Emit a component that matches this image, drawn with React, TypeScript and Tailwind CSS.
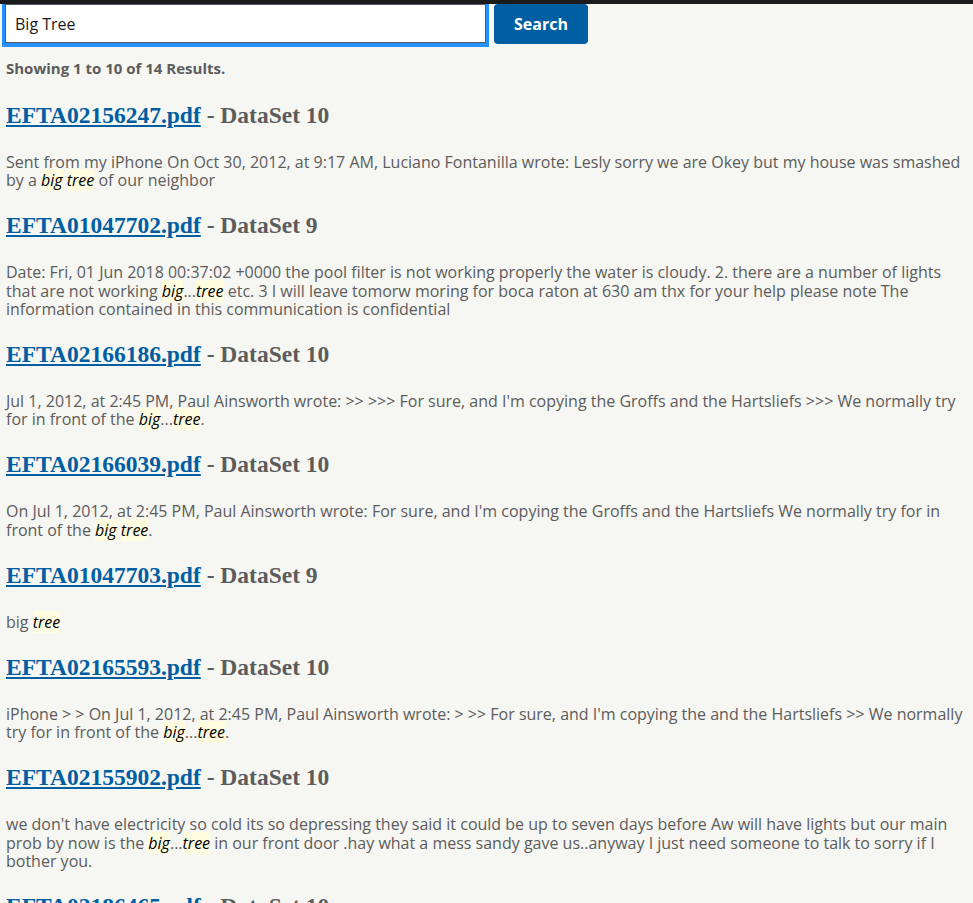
import { useState } from 'react';

type Parte = { t: string; hl?: boolean };

const resultados: { arquivo: string; dataset: number; trecho: Parte[] }[] = [
    {
        arquivo: 'EFTA02156247.pdf',
        dataset: 10,
        trecho: [
            { t: 'Sent from my iPhone On Oct 30, 2012, at 9:17 AM, Luciano Fontanilla wrote: Lesly sorry we are Okey but my house was smashed by a ' },
            { t: 'big', hl: true },
            { t: ' ' },
            { t: 'tree', hl: true },
            { t: ' of our neighbor' },
        ],
    },
    {
        arquivo: 'EFTA01047702.pdf',
        dataset: 9,
        trecho: [
            { t: 'Date: Fri, 01 Jun 2018 00:37:02 +0000 the pool filter is not working properly the water is cloudy. 2. there are a number of lights that are not working ' },
            { t: 'big', hl: true },
            { t: '...' },
            { t: 'tree', hl: true },
            { t: ' etc. 3 I will leave tomorw moring for boca raton at 630 am thx for your help please note The information contained in this communication is confidential' },
        ],
    },
    {
        arquivo: 'EFTA02166186.pdf',
        dataset: 10,
        trecho: [
            { t: "Jul 1, 2012, at 2:45 PM, Paul Ainsworth wrote: >> >>> For sure, and I'm copying the Groffs and the Hartsliefs >>> We normally try for in front of the " },
            { t: 'big', hl: true },
            { t: '...' },
            { t: 'tree', hl: true },
            { t: '.' },
        ],
    },
    {
        arquivo: 'EFTA02166039.pdf',
        dataset: 10,
        trecho: [
            { t: "On Jul 1, 2012, at 2:45 PM, Paul Ainsworth wrote: For sure, and I'm copying the Groffs and the Hartsliefs We normally try for in front of the " },
            { t: 'big', hl: true },
            { t: ' ' },
            { t: 'tree', hl: true },
            { t: '.' },
        ],
    },
    {
        arquivo: 'EFTA01047703.pdf',
        dataset: 9,
        trecho: [{ t: 'big ' }, { t: 'tree', hl: true }],
    },
    {
        arquivo: 'EFTA02165593.pdf',
        dataset: 10,
        trecho: [
            { t: "iPhone > > On Jul 1, 2012, at 2:45 PM, Paul Ainsworth wrote: > >> For sure, and I'm copying the and the Hartsliefs >> We normally try for in front of the " },
            { t: 'big', hl: true },
            { t: '...' },
            { t: 'tree', hl: true },
            { t: '.' },
        ],
    },
    {
        arquivo: 'EFTA02155902.pdf',
        dataset: 10,
        trecho: [
            { t: "we don't have electricity so cold its so depressing they said it could be up to seven days before Aw will have lights but our main prob by now is the " },
            { t: 'big', hl: true },
            { t: '...' },
            { t: 'tree', hl: true },
            { t: ' in our front door .hay what a mess sandy gave us..anyway I just need someone to talk to sorry if I bother you.' },
        ],
    },
    {
        arquivo: 'EFTA02186465.pdf',
        dataset: 10,
        trecho: [{ t: 'big tree' }],
    },
];

function App() {
    const [busca, setBusca] = useState('Big Tree');

    return (
        <div className="min-h-screen bg-[#f6f6f2] font-['Open_Sans',sans-serif] text-[#5c5c5c]">
            {/* barra escura do topo */}
            <div className="h-[4px] bg-[#1b1b1b]" />

            {/* --- BUSCA --- */}
            <div className="flex items-start gap-[5px] pl-[2px]">
                <div className="w-[487px] border-x-[3px] border-b-[4px] border-[#2491ff]">
                    <input
                        type="text"
                        value={busca}
                        onChange={(e) => setBusca(e.target.value)}
                        className="block w-full h-[39px] bg-white border border-[#565c65] px-[9px] text-[16px] text-[#1b1b1b] outline-none"
                    />
                </div>
                <button
                    type="button"
                    className="w-[94px] h-[40px] rounded-[4px] bg-[#005ea2] text-white font-bold text-[16px]"
                >
                    Search
                </button>
            </div>

            <div className="px-[6px]">
                <p className="mt-[12px] text-[15px] font-bold leading-[18px]">Showing 1 to 10 of 14 Results.</p>

                {/* --- RESULTADOS --- */}
                <div className="mt-[24px]">
                    {resultados.map((r) => (
                        <div key={r.arquivo} className="mb-[22px]">
                            <h2 className="font-['Liberation_Serif',serif] font-bold text-[23.5px] leading-[28px] text-[#5c5c5c] mb-[24px]">
                                <a href="#" className="text-[#005ea2] underline">{r.arquivo}</a>
                                {' - DataSet '}
                                {r.dataset}
                            </h2>
                            <p className="text-[16px] leading-[18.2px]">
                                {r.trecho.map((p, i) =>
                                    p.hl ? (
                                        <mark key={i} className="bg-[#fffde0] text-black italic">{p.t}</mark>
                                    ) : (
                                        <span key={i}>{p.t}</span>
                                    )
                                )}
                            </p>
                        </div>
                    ))}
                </div>
            </div>
        </div>
    );
}

export default App;
